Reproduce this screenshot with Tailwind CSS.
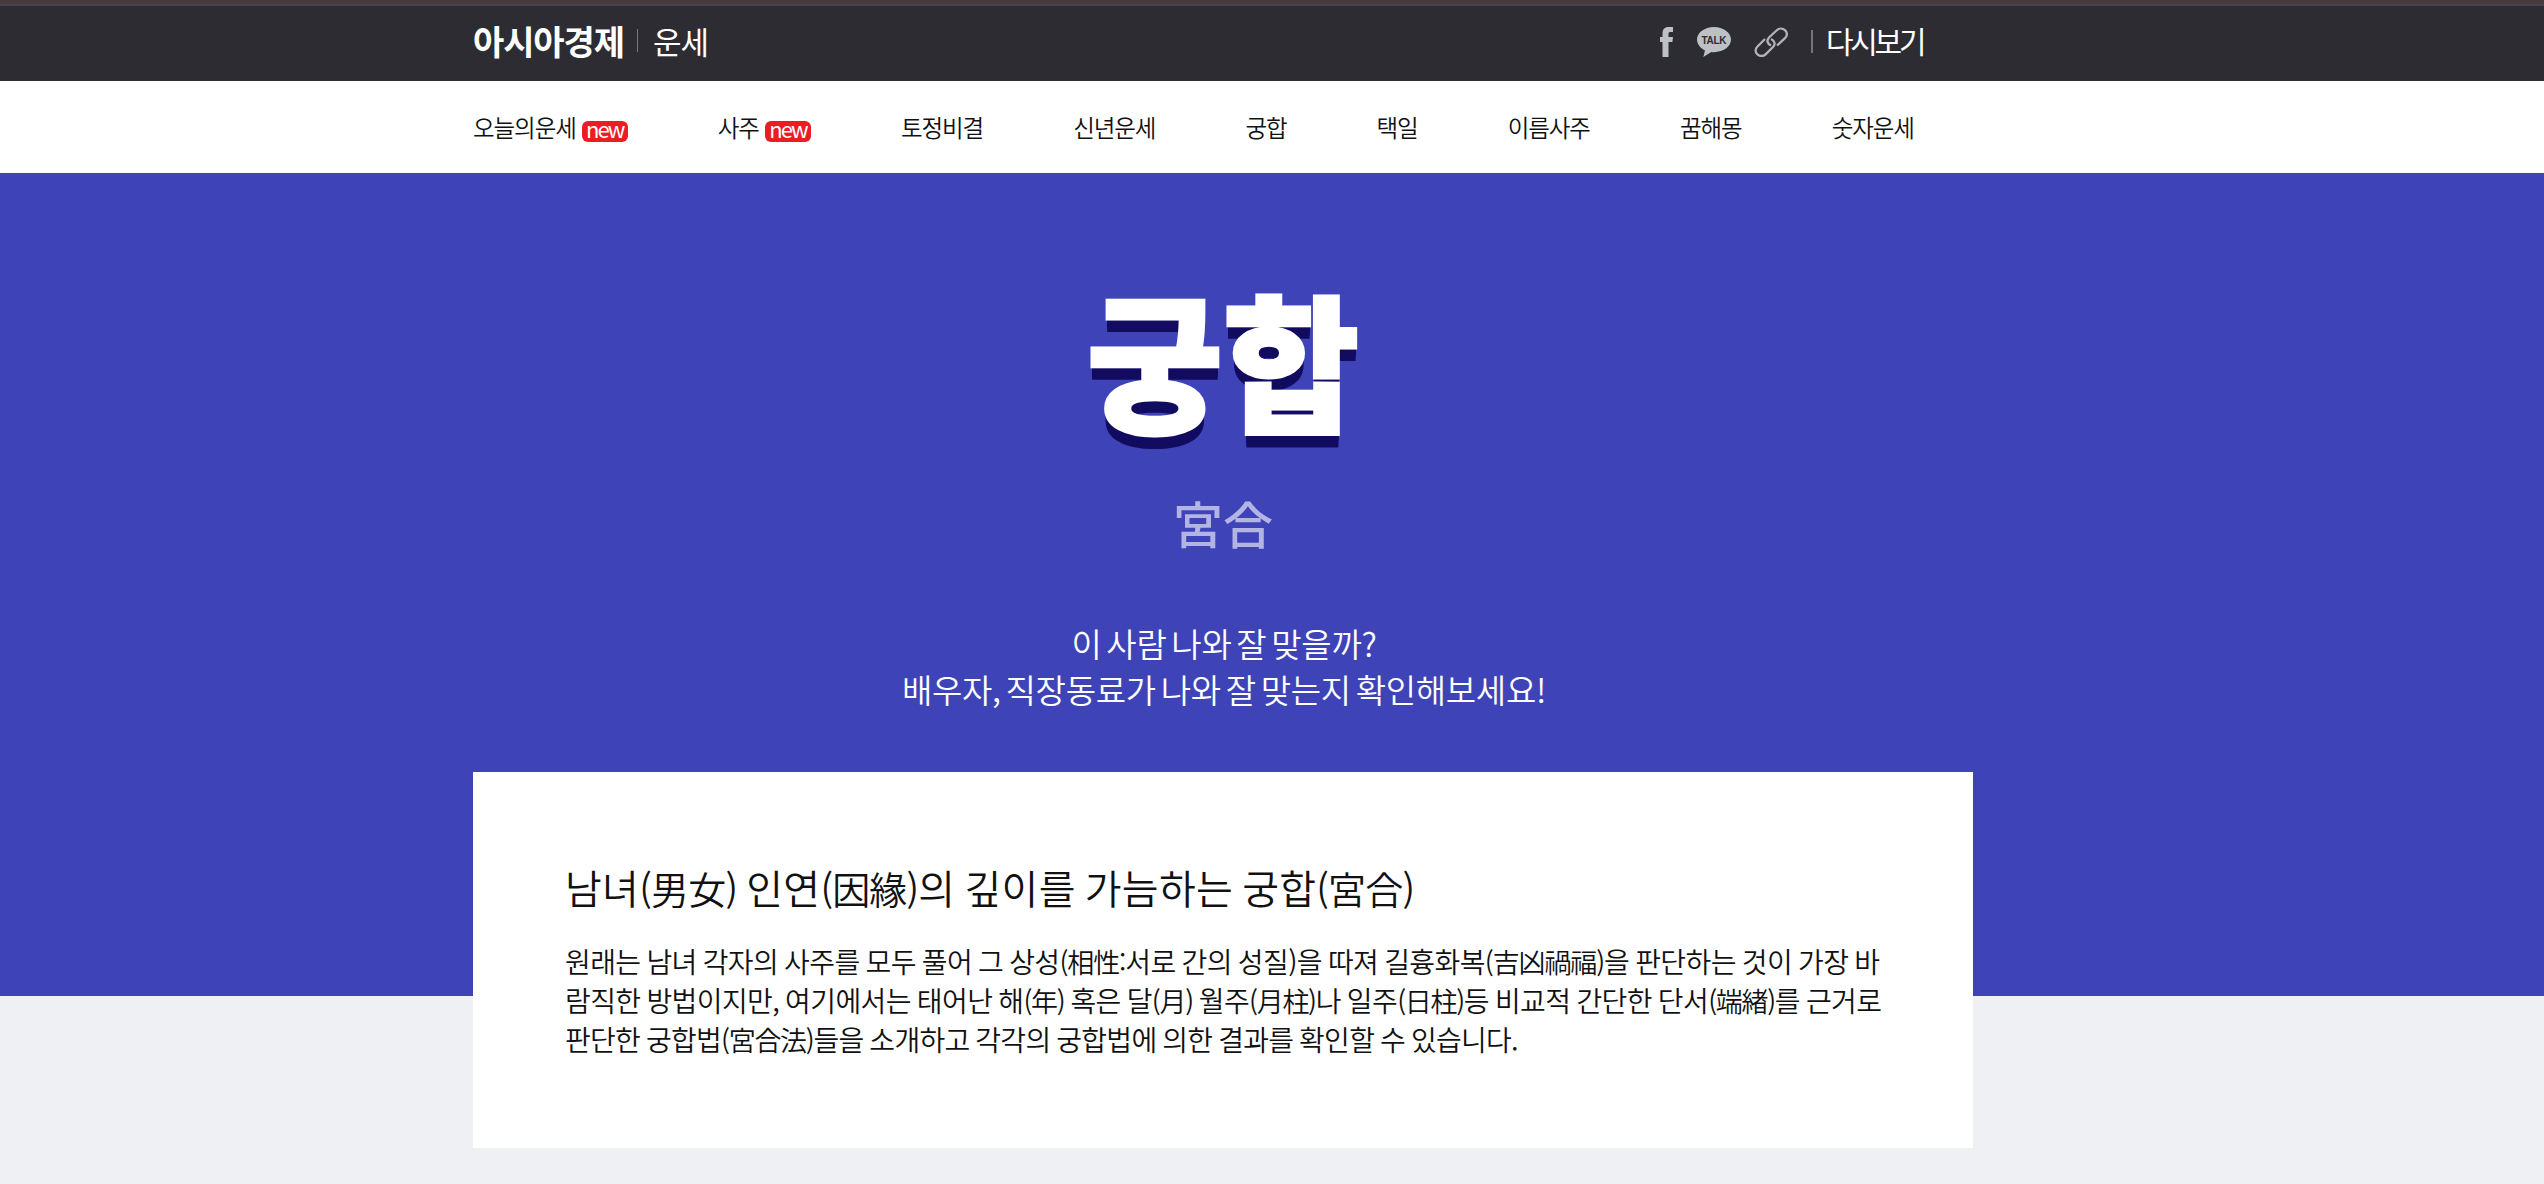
<!DOCTYPE html>
<html lang="ko">

<head>
    <meta charset="UTF-8" />
    <meta name="viewport" content="width=device-width, initial-scale=1.0" />
    <title>아시아경제 운세 - 궁합</title>
    <script src="https://cdn.jsdelivr.net/npm/@tailwindcss/browser@4"></script>
</head>

<body class="bg-[#eff0f4] font-['Noto_Sans_CJK_KR',sans-serif] text-[#111] h-[1184px] overflow-hidden">
    <!-- TOP BAR -->
    <header class="h-[81px] bg-[#2d2c32] border-t-4 border-[#463a3c]">
        <div class="h-[2px] bg-[#4a4349]"></div>
        <div class="ml-[473px] w-[1452px] h-[75px] flex items-center text-white">
            <a href="#" class="text-[34px] leading-none font-bold tracking-[-0.033em] w-[164px] whitespace-nowrap -mt-[5px]">아시아경제</a>
            <span class="w-px h-[23px] bg-[#7a797e] -mt-[6px]"></span>
            <a href="#" class="ml-[15px] text-[31px] leading-none tracking-[-0.03em] -mt-[6px]">운세</a>

            <div class="ml-auto w-[265px] flex items-center -mt-[4px]">
                <svg class="w-[13px] h-[30px]" viewBox="0 0 13 30" fill="#bcc1c5">
                    <path d="M2.500 30V15H0v-5h2.500V7c0-5 2-7 6-7H13v5h-2.500C9 5 8.500 5.600 8.500 7v3H13l-.6 5H8.500v15z" />
                </svg>
                <svg class="ml-6 w-[34px] h-[30px]" viewBox="0 0 34 30">
                    <path d="M17 0C7.500 0 0 5.600 0 12.600 0 17.200 3.200 21.200 8 23.400L6.300 30l8-5c.9.1 1.800.2 2.700.2 9.400 0 17-5.600 17-12.600S26.400 0 17 0z" fill="#bcc1c5" />
                    <text x="17" y="16.600" text-anchor="middle" font-family="Liberation Sans" font-size="10" font-weight="700" fill="#2d2c32" textLength="25">TALK</text>
                </svg>
                <svg class="ml-[23px] w-[34px] h-[30px]" viewBox="0 0 34 30" fill="none" stroke="#b2b3b7" stroke-width="2.300">
                    <path d="M17 18.500c-4-2-4.500-5-2-8l7.500-7c2.500-2.500 6-2.500 8.500-.3s2.500 5.700 0 8L23 18.500" />
                    <path d="M11 12l-7.500 7.500c-2.500 2.500-2.500 5.500-.2 7.800s6 2.200 8.300 0l7.400-7.300c2.500-2.500 2-6-2-8" />
                </svg>
                <span class="ml-[23px] w-[2px] h-[23px] bg-[#77767b]"></span>
                <a href="#" class="ml-[13px] -mt-[3px] text-[30px] leading-none tracking-[-0.11em] whitespace-nowrap">다시보기</a>
            </div>
        </div>
    </header>

    <!-- MENU -->
    <nav class="h-[92px] bg-white">
        <ul class="ml-[473px] h-full flex items-center gap-[90px] text-[23.500px] font-[350] tracking-[-0.045em] whitespace-nowrap pt-px">
            <li class="flex items-center gap-[6px]"><a href="#">오늘의운세</a>
                <span class="mt-[7px] w-[46px] h-[21px] rounded-md bg-[#ed1c24] text-white text-[22px] leading-[15px] tracking-[-0.09em] font-normal text-center">new</span></li>
            <li class="flex items-center gap-[6px]"><a href="#">사주</a>
                <span class="mt-[7px] w-[46px] h-[21px] rounded-md bg-[#ed1c24] text-white text-[22px] leading-[15px] tracking-[-0.09em] font-normal text-center">new</span></li>
            <li><a href="#">토정비결</a></li>
            <li><a href="#">신년운세</a></li>
            <li><a href="#">궁합</a></li>
            <li><a href="#">택일</a></li>
            <li><a href="#">이름사주</a></li>
            <li><a href="#">꿈해몽</a></li>
            <li><a href="#">숫자운세</a></li>
        </ul>
    </nav>

    <!-- HERO -->
    <section class="h-[823px] bg-[#3e44b8]">
        <div class="ml-[473px] w-[1500px] text-white text-center">
            <h1 class="h-[299px] pt-[104px] text-[148px] leading-[160px] font-black [-webkit-text-stroke:3px_white] [text-shadow:0_2px_0_#120c60,0_4px_0_#120c60,0_6px_0_#120c60,0_8px_0_#120c60,0_10px_0_#120c60,0_13px_0_#120c60]">궁합</h1>
            <p class="h-[100px] text-[50px] leading-[100px] font-medium text-[#b2b4e3]">宮合</p>
            <p class="pt-[48px] pl-[2px] text-[33px] leading-[46px] font-[350] tracking-[-0.32px] [word-spacing:-4px]">이 사람 나와 잘 맞을까?<br />배우자, 직장동료가 나와 잘 맞는지 확인해보세요!</p>
        </div>

        <!-- INTRO CARD -->
        <div class="ml-[473px] mt-[60px] w-[1500px] h-[376px] bg-white pl-[92px] pt-[86px] whitespace-nowrap font-[350]">
            <h2 class="text-[40px] leading-[58px] tracking-[0.300px] [word-spacing:-2.500px]">남녀<span class="text-[38px] tracking-[-0.800px]">(男女)</span> 인연<span class="text-[38px] tracking-[-0.800px]">(因緣)</span>의 깊이를 가늠하는 궁합<span class="text-[38px] tracking-[-0.800px]">(宮合)</span></h2>
            <p class="mt-[25px] text-[28px] leading-[39px] tracking-[-0.600px] [word-spacing:-1.300px]">
                원래는 남녀 각자의 사주를 모두 풀어 그 상성<span class="text-[27px] tracking-[-1.100px]">(相性:</span>서로 간의 성질)을 따져 길흉화복<span class="text-[27px] tracking-[-1.100px]">(吉凶禍福)</span>을 판단하는 것이 가장 바<br />
                람직한 방법이지만, 여기에서는 태어난 해<span class="text-[27px] tracking-[-1.300px]">(年)</span> 혹은 달<span class="text-[27px] tracking-[-1.300px]">(月)</span> 월주<span class="text-[27px] tracking-[-1.300px]">(月柱)</span>나 일주<span class="text-[27px] tracking-[-1.300px]">(日柱)</span>등 비교적 간단한 단서<span class="text-[27px] tracking-[-1.300px]">(端緖)</span>를 근거로<br />
                <span class="tracking-[-0.720px]">판단한 궁합법<span class="text-[27px] tracking-[-1.300px]">(宮合法)</span>들을 소개하고 각각의 궁합법에 의한 결과를 확인할 수 있습니다.</span>
            </p>
        </div>
    </section>
</body>

</html>
